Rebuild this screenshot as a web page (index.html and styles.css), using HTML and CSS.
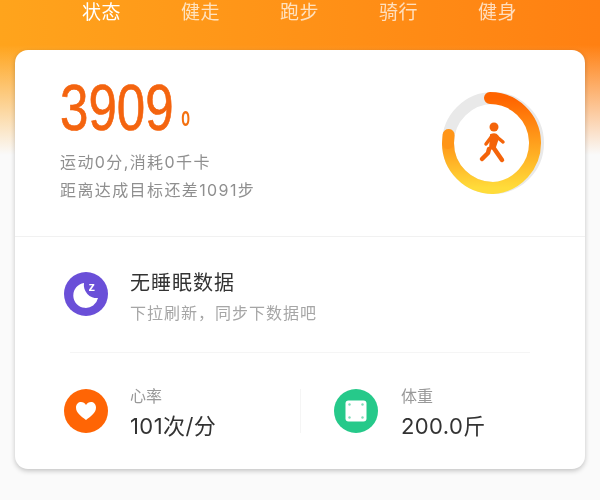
FILE: index.html
```html
<!DOCTYPE html>
<html lang="zh-CN">
  <head>
    <meta charset="UTF-8" />
    <title>状态</title>
    <link rel="stylesheet" href="styles.css">
  </head>
  <body>
    <div class="page">
      <div class="tabs">
        <span class="tab tab-on">状态</span>
        <span class="tab">健走</span>
        <span class="tab">跑步</span>
        <span class="tab">骑行</span>
        <span class="tab">健身</span>
      </div>

      <div class="card">
        <div class="steps">
          <div class="steps-text">
            <div class="count-row">
              <span class="count">3909</span>
              <span class="unit">0</span>
            </div>
            <p class="steps-line">运动0分,消耗0千卡</p>
            <p class="steps-line">距离达成目标还差1091步</p>
          </div>
          <svg class="ring" width="104" height="104" viewBox="0 0 104 104">
            <defs>
              <linearGradient id="ringRight" x1="0" y1="0" x2="0" y2="1">
                <stop offset="0" stop-color="#ff6400" />
                <stop offset="1" stop-color="#ffdc3a" />
              </linearGradient>
              <linearGradient id="ringLeft" x1="0" y1="1" x2="0" y2="0">
                <stop offset="0" stop-color="#ffdc3a" />
                <stop offset="1" stop-color="#ff9518" />
              </linearGradient>
            </defs>
            <circle cx="52" cy="52" r="45" fill="none" stroke="#e9e9e9" stroke-width="12" />
            <path d="M7 52 A45 45 0 0 0 52 97" fill="none" stroke="url(#ringLeft)" stroke-width="12" />
            <path d="M7.6 44 L7 52" fill="none" stroke="#ff9518" stroke-width="12" stroke-linecap="round" />
            <path d="M52 97 A45 45 0 0 0 49 7.1" fill="none" stroke="url(#ringRight)" stroke-width="12" stroke-linecap="round" />
            <circle cx="53" cy="36" r="4.5" fill="#f4640a" />
            <path d="M50 44 C54 42 57 44 57 47 L54 56 L49 58 Z" fill="#f4640a" stroke="#f4640a" stroke-width="2" stroke-linejoin="round" />
            <path d="M51 45 L45 53 M56 46 L62 51" fill="none" stroke="#f4640a" stroke-width="3.500" stroke-linecap="round" />
            <path d="M48 58 L47 62 L41 68 M52 56 L61 69" fill="none" stroke="#f4640a" stroke-width="4.500" stroke-linecap="round" stroke-linejoin="round" />
          </svg>
        </div>

        <div class="sleep">
          <svg class="icon" width="44" height="44" viewBox="0 0 44 44">
            <circle cx="22" cy="22" r="22" fill="#6a4fd8" />
            <path d="M20 11 A12.500 12.500 0 1 0 34 26 A13 13 0 0 1 20 11 Z" fill="#fff" />
            <text class="icon-z" x="24.500" y="19">z</text>
          </svg>
          <div class="sleep-text">
            <div class="sleep-title">无睡眠数据</div>
            <div class="sleep-sub">下拉刷新，同步下数据吧</div>
          </div>
        </div>
        <div class="sleep-line"></div>

        <div class="stats">
          <div class="stat">
            <svg class="icon" width="44" height="44" viewBox="0 0 44 44">
              <circle cx="22" cy="22" r="22" fill="#ff6505" />
              <path d="M22 31 C17 27 12 24 12 18.500 C12 15 14.500 13 17 13 C19 13 21 14 22 16 C23 14 25 13 27 13 C29.500 13 32 15 32 18.500 C32 24 27 27 22 31 Z" fill="#fff" />
            </svg>
            <div class="stat-text">
              <div class="stat-label">心率</div>
              <div class="stat-value">101次/分</div>
            </div>
          </div>
          <div class="stat stat-right">
            <svg class="icon" width="44" height="44" viewBox="0 0 44 44">
              <circle cx="22" cy="22" r="22" fill="#26c98a" />
              <rect x="11.500" y="11.500" width="21" height="21" rx="3" fill="#fff" />
              <circle cx="15.500" cy="15.500" r="1.200" fill="#7fdcb8" />
              <circle cx="28.500" cy="15.500" r="1.200" fill="#7fdcb8" />
              <circle cx="15.500" cy="28.500" r="1.200" fill="#7fdcb8" />
              <circle cx="28.500" cy="28.500" r="1.200" fill="#7fdcb8" />
            </svg>
            <div class="stat-text">
              <div class="stat-label">体重</div>
              <div class="stat-value">200.0斤</div>
            </div>
          </div>
        </div>
      </div>
    </div>
  </body>
</html>
```

FILE: styles.css
```css
html,
body {
  margin: 0;
  height: 100%;
}

body {
  overflow: hidden;
  background-color: #fafafa;
  font-family: Inter, "Noto Sans CJK SC", sans-serif;
}

.page {
  height: 500px;
  box-sizing: border-box;
  padding: 0 15px;
  background:
    linear-gradient(to bottom, rgba(250, 250, 250, 0) 45px, #fafafa 155px),
    linear-gradient(to right, #ffa41c, #ff8012);
  filter: blur(0.6px);
}

/* tabs on the orange header */
.tabs {
  display: flex;
  height: 50px;
  padding-left: 37px;
}

.tab {
  width: 99px;
  height: 26px;
  line-height: 26px;
  text-align: center;
  font-size: 19px;
  letter-spacing: 0.5px;
  color: rgba(255, 255, 255, 0.72);
}

.tab-on {
  color: #fff;
}

.card {
  height: 419px;
  background-color: #fff;
  border-radius: 13px;
  box-shadow: 0 2px 5px rgba(0, 0, 0, 0.22);
}

/* steps block */
.steps {
  display: flex;
  justify-content: space-between;
  height: 186px;
  padding: 0 40px 0 45px;
  border-bottom: 1px solid #f1f1f1;
}

.count-row {
  display: flex;
  align-items: flex-end;
  height: 98px;
}

.count {
  width: 112px;
  font-family: "Liberation Sans", sans-serif;
  font-size: 65px;
  line-height: 80px;
  color: #f4640f;
  -webkit-text-stroke: 0.7px #f4640f;
  transform: scaleX(0.785);
  transform-origin: left bottom;
}

.unit {
  margin: 0 0 18px 7px;
  font-size: 20px;
  line-height: 22px;
  font-weight: 700;
  color: #f4700f;
  transform: scaleX(0.65);
}

.steps-line {
  margin: 0;
  font-size: 16px;
  line-height: 28px;
  letter-spacing: 1.4px;
  color: #8f8f8f;
}

.ring {
  margin-top: 41px;
}

/* sleep block */
.sleep {
  display: flex;
  align-items: flex-start;
  gap: 22px;
  height: 115px;
  box-sizing: border-box;
  padding: 35px 0 0 49px;
}

.sleep-text {
  margin-top: -3px;
}

.sleep-title {
  font-size: 20px;
  line-height: 28px;
  letter-spacing: 1px;
  color: #333;
}

.sleep-sub {
  margin-top: 4px;
  font-size: 16px;
  line-height: 24px;
  letter-spacing: 1px;
  color: #a6a6a6;
}

.sleep-line {
  height: 1px;
  margin: 0 55px;
  background-color: #f5f5f5;
}

.icon {
  flex-shrink: 0;
}

.icon-z {
  font-family: "Liberation Sans", sans-serif;
  font-size: 13px;
  font-weight: 700;
  fill: #fff;
}

/* heart rate and weight */
.stats {
  display: flex;
  align-items: center;
  height: 116px;
  padding-left: 49px;
}

.stat {
  display: flex;
  align-items: center;
  gap: 22px;
  width: 236px;
  height: 44px;
}

.stat-right {
  width: auto;
  gap: 23px;
  padding-left: 33px;
  border-left: 1px solid #f5f5f5;
}

.stat-text {
  margin-top: 3px;
}

.stat-label {
  font-size: 16px;
  line-height: 20px;
  color: #999;
}

.stat-value {
  margin-top: 6px;
  font-size: 22px;
  line-height: 28px;
  letter-spacing: 0.4px;
  color: #333;
}
```
